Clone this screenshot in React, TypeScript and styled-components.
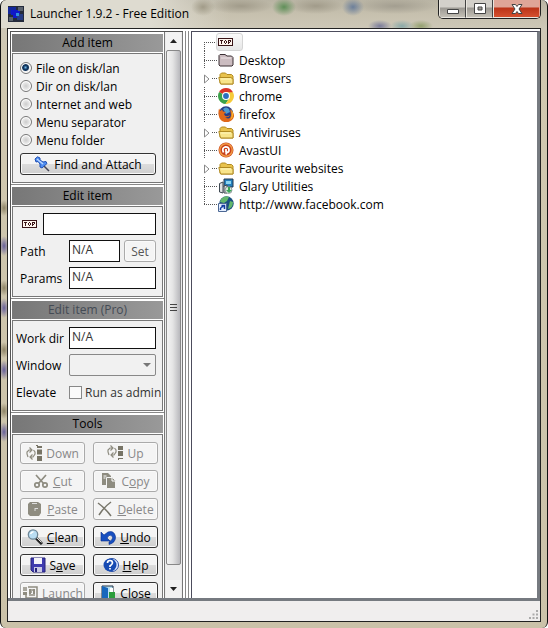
import React from "react";
import styled, { createGlobalStyle, css } from "styled-components";

const GlobalStyle = createGlobalStyle`
  * { box-sizing: border-box; }
  html, body { margin: 0; height: 100%; }
  body, button, input, select {
    font-family: "Open Sans", "Noto Sans", sans-serif;
    font-size: 12px;
    color: #000;
  }
`;

const Window = styled.div`
  display: flex;
  flex-direction: column;
  height: 100vh;
  overflow: hidden;
  padding: 0 6px 6px;
  border-left: 1px solid #111;
  border-right: 1px solid #111;
  border-radius: 6px;
  background:
    radial-gradient(ellipse 5px 8px at 3px 208px, #8d8366, transparent),
    radial-gradient(ellipse 5px 10px at 3px 246px, #67609a, transparent),
    radial-gradient(ellipse 5px 8px at 3px 288px, #8d8366, transparent),
    radial-gradient(ellipse 5px 10px at 3px 308px, #67609a, transparent),
    radial-gradient(ellipse 5px 8px at 3px 350px, #8d8366, transparent),
    radial-gradient(ellipse 5px 10px at 3px 370px, #67609a, transparent),
    radial-gradient(ellipse 5px 8px at 3px 411px, #8d8366, transparent),
    radial-gradient(ellipse 5px 10px at 3px 432px, #67609a, transparent),
    radial-gradient(ellipse 12px 9px at 202px 7px, #a19b88, transparent),
    radial-gradient(ellipse 32px 8px at 240px 6px, #a19b8a, transparent),
    radial-gradient(ellipse 12px 9px at 283px 7px, #5f8f58, transparent),
    radial-gradient(ellipse 28px 8px at 315px 6px, #a19b8a, transparent),
    radial-gradient(ellipse 11px 9px at 352px 7px, #6c7f9a, transparent),
    radial-gradient(ellipse 42px 8px at 394px 6px, #a39e90, transparent),
    radial-gradient(ellipse 12px 6px at 379px 26px, #7b7c9a, transparent),
    radial-gradient(ellipse 12px 6px at 401px 26px, #8aa9a8, transparent),
    radial-gradient(ellipse 12px 6px at 420px 26px, #93a06f, transparent),
    linear-gradient(90deg, #dedbd0 0, #dedbd0 150px, transparent 230px) 0 0 / 100% 28px no-repeat,
    linear-gradient(#b9b4a4 0, #c6c0ae 14px, #cdc7b7 28px, #d0c8b0 60px, #cbc2a9 100%);
`;

const TitleBar = styled.header`
  display: flex;
  flex: none;
  height: 28px;
  align-items: flex-start;
`;

const Title = styled.h1`
  flex: 1;
  margin: 0;
  padding: 4px 0 0 6px;
  font-size: 12px;
  font-weight: 400;
  line-height: 20px;
`;

const AppMark = styled.svg`
  margin: 6px 0 0 1px;
  width: 16px;
  height: 16px;
`;

const Captions = styled.div`
  display: flex;
  height: 19px;
  border: 1px solid #222;
  border-top: 0;
  border-radius: 0 0 5px 5px;
  overflow: hidden;
`;

const Caption = styled.button<{ $close?: boolean }>`
  width: ${(p) => (p.$close ? 47 : 27)}px;
  padding: 0;
  border: 1px solid #e9e6df;
  border-top: 0;
  border-right-color: ${(p) => (p.$close ? "#e9a090" : "#444")};
  background: ${(p) =>
    p.$close
      ? "linear-gradient(#dfa597 0 40%, #bb3419 48%, #d5502f)"
      : "linear-gradient(#d3d0ca 0 40%, #9c9993 48%, #c3bfb5)"};
  svg { display: block; margin: 0 auto; }
`;

const Client = styled.main`
  display: flex;
  flex: 1;
  flex-direction: column;
  min-height: 0;
  border: 1px solid #222;
  background: #fff;
`;

const Body = styled.div`
  display: flex;
  flex: 1;
  min-height: 0;
  padding: 2px 0 0 2px;
  border-bottom: 3px solid #767a80;
`;

const Sidebar = styled.aside`
  display: flex;
  flex: none;
  width: 173px;
  border-left: 1px solid #555;
  border-top: 1px solid #555;
`;

const Groups = styled.div`
  flex: 1;
  min-width: 0;
  overflow: hidden;
  border-right: 1px solid #777;
`;

const Group = styled.section`
  padding: 2px 1px 1px;
  border-bottom: 1px solid #888;
`;

const GroupTitle = styled.h2<{ $muted?: boolean }>`
  height: 18px;
  margin: 0 0 1px;
  background: linear-gradient(90deg, #777, #999);
  color: ${(p) => (p.$muted ? "#444b55" : "#000")};
  font-size: 12px;
  font-weight: 400;
  line-height: 18px;
  text-align: center;
`;

const GroupBody = styled.div<{ $gap: number; $top: number }>`
  display: flex;
  flex-direction: column;
  gap: ${(p) => p.$gap}px;
  padding: ${(p) => p.$top}px 6px 7px 7px;
  border: 1px solid #777;
  background: #f0f0f0;
`;

const Radio = styled.label`
  display: flex;
  height: 18px;
  align-items: center;
  gap: 4px;
  white-space: nowrap;
  input {
    appearance: none;
    width: 12px;
    height: 12px;
    margin: 0;
    border: 1px solid #777;
    border-radius: 50%;
    background: radial-gradient(circle, #ccc, #eee 60%);
    box-shadow: inset 0 0 0 1px #fff;
  }
  input:checked {
    background: radial-gradient(circle at 45% 45%, #6fb8ea 0, #12365e 2px, #12365e 3px, #eee 4px);
  }
`;

const buttonFace = css`
  display: flex;
  align-items: center;
  justify-content: center;
  height: 22px;
  padding: 0;
  border: 1px solid #333;
  border-radius: 3px;
  background: linear-gradient(#f4f4f4 0 48%, #dcdcdc 52%, #cfcfcf);
  box-shadow: inset 0 0 0 1px #fafafa;
  white-space: nowrap;
  &:disabled {
    border-color: #aaa;
    background: #f4f4f4;
    color: #888;
  }
`;

const Button = styled.button`
  ${buttonFace}
  gap: 4px;
  svg { flex: none; }
`;

const FindButton = styled(Button)`
  margin-top: 4px;
`;

const SetButton = styled(Button)`
  flex: none;
  width: 32px;
  &:disabled { color: #555; }
`;

const Field = styled.div`
  display: flex;
  height: 22px;
  align-items: center;
  gap: 4px;
`;

const FieldLabel = styled.label`
  flex: none;
  width: 45px;
  white-space: nowrap;
`;

const ProLabel = styled(FieldLabel)`
  width: 49px;
  margin-left: -4px;
`;

const TopLabel = styled.label`
  display: flex;
  flex: none;
  width: 19px;
  padding-left: 2px;
`;

const TextBox = styled.input`
  flex: 1;
  min-width: 0;
  height: 22px;
  padding: 0 2px 4px;
  border: 1px solid #111;
  border-radius: 0;
  background: #fff;
  color: #333;
`;

const SelectWrap = styled.div`
  display: flex;
  flex: 1;
  align-items: center;
`;

const Select = styled.select`
  appearance: none;
  width: 100%;
  height: 22px;
  border: 1px solid #888;
  border-radius: 2px;
  background: #f1f1f1;
  opacity: 1;
`;

const SelectArrow = styled.svg`
  flex: none;
  margin-left: -13px;
  width: 8px;
  height: 4px;
  pointer-events: none;
`;

const Check = styled.label`
  display: flex;
  align-items: center;
  gap: 3px;
  color: #333;
  white-space: nowrap;
  input {
    appearance: none;
    width: 13px;
    height: 13px;
    margin: 0;
    border: 1px solid #888;
    background: #fafafa;
  }
`;

const Tools = styled.div`
  display: grid;
  grid-template-columns: 65px 65px;
  gap: 6px 8px;
`;

const ScrollBar = styled.div`
  display: flex;
  flex: none;
  flex-direction: column;
  width: 18px;
  padding: 0 1px;
  border-right: 1px solid #777;
  background: #ececec;
`;

const ScrollArrow = styled.button`
  height: 18px;
  padding: 0;
  border: 0;
  background: #f2f2f2;
  svg { display: block; margin: 0 auto; }
`;

const Track = styled.div`
  display: flex;
  flex: 1;
  flex-direction: column;
  min-height: 0;
  padding-bottom: 15px;
`;

const Thumb = styled.div`
  display: flex;
  flex: 1;
  align-items: center;
  justify-content: center;
  border: 1px solid #888;
  border-radius: 2px;
  background: linear-gradient(90deg, #f4f4f4, #e4e4e4 45%, #b8b8bc);
`;

const Splitter = styled.div`
  flex: none;
  width: 4px;
  margin: 0 2px;
  border: 1px solid #888;
  border-width: 0 1px;
`;

const TreePane = styled.div`
  flex: 1;
  min-width: 0;
  padding: 1px 0 0 12px;
  border: 1px solid #4c4c5c;
  border-right: 3px solid #767a80;
  border-bottom: 0;
  background: #fff;
`;

const Tree = styled.ul`
  margin: 0;
  padding: 0;
  list-style: none;
`;

const Node = styled.li`
  display: flex;
  height: 18px;
  align-items: center;
  line-height: 18px;
  white-space: nowrap;
  > svg { flex: none; }
`;

const NodeButton = styled.button<{ $selected?: boolean }>`
  display: flex;
  align-items: center;
  height: 18px;
  gap: 5px;
  padding: 0 8px 0 1px;
  margin-left: -2px;
  border: 1px solid ${(p) => (p.$selected ? "#d4d4d4" : "transparent")};
  border-radius: 3px;
  background: ${(p) => (p.$selected ? "linear-gradient(#fafafa, #e6e6e6)" : "none")};
`;

const StatusBar = styled.footer`
  display: flex;
  flex: none;
  height: 20px;
  align-items: flex-end;
  justify-content: flex-end;
  padding: 2px;
  background: #f0eeee;
`;

type IconName =
  | "top" | "desktop" | "folder" | "chrome" | "firefox" | "avast" | "glary" | "web"
  | "pin" | "down" | "up" | "cut" | "copy" | "paste" | "delete" | "clean" | "undo"
  | "save" | "help" | "launch" | "close";

const gray = "#8e8c80";

const art: Record<IconName, React.ReactNode> = {
  top: (
    <g fill="none" stroke="#3a1518" shapeRendering="crispEdges">
      <path d="M.5 4.5h14v7H.5z" fill="#fff5ee" />
      <path d="M2 6.5h3M3.5 6v4M6.5 7v2M8.500 7v2M7 6.500h1M7 9.500h1M10.500 6v4M11 6.500h2M12.500 6v2M11 8.500h1" />
    </g>
  ),
  desktop: (
    <g stroke="#3c3035" fill="#cbbcc0">
      <path d="M1 13V3.500L2 2.500h5L9 4h4.500L15 5.500V13l-1 1H2z" />
      <path d="M3 6h10" stroke="#efe5e8" />
    </g>
  ),
  folder: (
    <g stroke="#b18a22">
      <path d="M2 13V4.500L3.500 3h4L9 4.500h4.500L15 6v8H3z" fill="#e8c24c" />
      <path d="M.8 7.500h12L15 9v5H2.500z" fill="#f8e48a" />
      <path d="M3 9h10" stroke="#fff6bd" />
    </g>
  ),
  chrome: (
    <g>
      <path d="M8 8 1.100 4A8 8 0 0 1 15 4.300z" fill="#da3528" />
      <path d="M8 8 1.100 4A8 8 0 0 0 7.500 16L11.500 10z" fill="#3ca14a" />
      <path d="M8 4.300h7A8 8 0 0 1 7.500 16L11.500 10z" fill="#f6cb3a" />
      <circle cx="8" cy="8" r="4" fill="#fff" />
      <circle cx="8" cy="8" r="2.900" fill="#2b6fc0" />
    </g>
  ),
  firefox: (
    <g>
      <circle cx="8" cy="7.500" r="7.200" fill="#263e87" />
      <path d="M5 3q3-3 6 0l1 3-4 2z" fill="#4d9bd1" />
      <path d="M1 2.500 2.500 5 4 3.500l1 2L8 6 6 8q1 3 4 2l2-1q-1 3-5 2 5 4 6-2l-1-6q7 6 2 11-5 4-10 1Q-1 11 1 2.500z" fill="#e0681a" />
      <path d="M13 3q5 7-1 11 3-4 1-11z" fill="#f7b72f" />
    </g>
  ),
  avast: (
    <g fill="none">
      <circle cx="8" cy="8" r="7.500" fill="#c8401c" />
      <circle cx="8" cy="8" r="6.200" stroke="#f09a45" strokeWidth="1.500" />
      <path d="M5.500 10.500Q3.500 6 7 5q4-.5 4 3 0 2.500-2.500 2.500L8 12.500M8 7v3.500" stroke="#fff" strokeWidth="1.800" />
    </g>
  ),
  glary: (
    <g>
      <path d="M6 1h9v8H6z" fill="#247fbc" stroke="#26384e" />
      <path d="M8 3h5v3H8z" fill="#8cd5f0" />
      <path d="M1.500 5.500 5 4v11l-3.500-1zM6 8l3-1v8H6z" fill="#dfe2e3" stroke="#3e4851" />
      <circle cx="10.500" cy="12" r="3.500" fill="#d5ead8" stroke="#667" strokeWidth=".6" />
      <path d="M10 9v3H8l3 3 3-3h-2V9z" fill="#36a455" />
    </g>
  ),
  web: (
    <g>
      <circle cx="8.500" cy="7.500" r="7.200" fill="#194f80" />
      <path d="M3 3q4-4 8-2L9 5 6 7 2 6zM12 5l3 1q0 6-5 7z" fill="#62b76b" />
      <path d="M.5 7.500h8v8h-8z" fill="#e5efff" stroke="#4c6894" />
      <path d="M2.500 14Q2 11 5.500 10.500M3.500 9.500h3V13" fill="none" stroke="#123ca0" strokeWidth="1.500" />
    </g>
  ),
  pin: (
    <g stroke="#1f4fb4">
      <path d="M9 9l6 6" stroke="#445" strokeWidth="1.500" />
      <path d="M1 3 3.500.8 6 2v2l3 2 3-.5 1 2L8 12l-2-1V8L4 5.500 2 6z" fill="#4f8df0" />
      <path d="M3 3l6 5" stroke="#bad6ff" strokeWidth="1.500" />
    </g>
  ),
  down: (
    <g fill="none" stroke={gray} strokeWidth="1.200">
      <path d="M2 12 1 9V7l2-2h3M3.500 2.500 6 5 3.500 7.500M7.500 5 9 7v2l-2 3H4M6.500 9.500 4 12l2.500 2.500" />
      <path d="M10 0h2v1h4v2h-5V1h-1zM11 4.500h5v5h-5zM11 11h5v5h-5z" fill="#777466" stroke="none" />
    </g>
  ),
  up: (
    <g fill="none" stroke={gray} strokeWidth="1.200">
      <path d="M2 10 1 7V5l2-2h3M3.500.5 6 3 3.500 5.500M7.500 3 9 5v2l-2 3H4M6.500 7.500 4 10l2.500 2.500" />
      <path d="M11 1h5v4h-5zM11 6h5v5h-5zM11 13h5v1h-4v1h-1z" fill="#777466" stroke="none" />
    </g>
  ),
  cut: (
    <g fill="none" stroke={gray} strokeWidth="1.700">
      <path d="M3 2l8 9M13 2l-8 9" />
      <circle cx="4" cy="12" r="2.200" />
      <circle cx="12" cy="12" r="2.200" />
    </g>
  ),
  copy: (
    <g fill={gray} stroke="none">
      <path d="M1 0h6l3 3v9H1z" />
      <path d="M2.500 3h3M2.500 5h2" stroke="#fff" />
      <path d="M5.500 4.500h6l3 3v8h-9z" stroke="#f4f4f4" />
      <path d="M11 5v3h3" fill="none" stroke="#fff" />
    </g>
  ),
  paste: (
    <g fill={gray}>
      <path d="M1 3l2-2h8l3 2v9l-2 3H3l-2-2z" />
      <path d="M5 2.500h5M8 7.500h3M8 7v3" stroke="#ddd" fill="none" />
    </g>
  ),
  delete: <path d="M1 2q7 5 13 13M14 1Q7 6 2 14" fill="none" stroke="#77756a" strokeWidth="1.500" />,
  clean: (
    <g>
      <path d="M9 9l6 6" stroke="#222" strokeWidth="3" />
      <path d="M9.500 8.500l5 5" stroke="#ddd" />
      <circle cx="6" cy="5.500" r="4.700" fill="#b9ddf3" stroke="#6f8797" strokeWidth="1.300" />
      <path d="M3.500 5q1-2.500 3-2" stroke="#fff" fill="none" strokeWidth="1.500" />
    </g>
  ),
  undo: (
    <path d="M1 3v9h9L7 9q2-4 5-2 2 3-3 6v2.500q7-2 6.500-8Q14 1 8 3L4 6z" fill="#174fc0" stroke="#092e8c" strokeWidth=".6" />
  ),
  save: (
    <g>
      <path d="M1 1h14v14H3l-2-2z" fill="#3f3caf" stroke="#26237a" />
      <path d="M4 1h8v6H4z" fill="#f3f3fa" />
      <path d="M4 10h8v5H4z" fill="#c9c9e4" />
      <path d="M5 11h2v4H5z" fill="#26237a" />
    </g>
  ),
  help: (
    <g>
      <circle cx="9" cy="8" r="6.500" fill="#e2eaff" stroke="#294fa4" />
      <circle cx="7" cy="8" r="6.500" fill="#174bb3" />
      <path d="M4.500 6q0-2.500 2.500-2.500T9.500 6Q9.500 7 7 9v1M7 11v1.500" fill="none" stroke="#fff" strokeWidth="1.700" />
    </g>
  ),
  launch: (
    <g fill="none" stroke={gray} strokeWidth="1.500">
      <path d="M6 2h9v11H4V9M1 3h4M1 5h4M8 5h5M8 7h2M12 7h1M7 10h6" />
      <path d="M1 7h4v3H1zM7 4h2v5H7zM11 4h2v5h-2z" fill={gray} stroke="none" />
    </g>
  ),
  close: (
    <g>
      <path d="M2 1h11v14H2z" fill="#b9e1f2" stroke="#234" />
      <path d="M2 1l6 2v13l-6-2z" fill="#1767bd" />
      <path d="M9 7h6v7H9z" fill="#2b9d3c" />
      <path d="M10 3h3v4h-3z" fill="#fff" />
    </g>
  ),
};

const Icon = ({ name }: { name: IconName }) => (
  <svg width="16" height="16" viewBox="0 0 16 16" aria-hidden="true">{art[name]}</svg>
);

const Branch = ({ expandable, place }: { expandable?: boolean; place: "first" | "middle" | "last" }) => (
  <svg width="14" height="18" viewBox="0 0 14 18" aria-hidden="true">
    <g stroke="#555" strokeDasharray="1 1" shapeRendering="crispEdges">
      {!expandable && <path d={`M.5 ${place === "first" ? 9 : 0}V${place === "last" ? 10 : 18}`} />}
      <path d={`M${expandable ? 8 : 0} 9.500H14`} />
    </g>
    {expandable && <path d="M.5 6v8L5 10z" fill="#fff" stroke="#888" />}
  </svg>
);

const nodes: { icon: IconName; text: string; expandable?: boolean }[] = [
  { icon: "top", text: "" },
  { icon: "desktop", text: "Desktop" },
  { icon: "folder", text: "Browsers", expandable: true },
  { icon: "chrome", text: "chrome" },
  { icon: "firefox", text: "firefox" },
  { icon: "folder", text: "Antiviruses", expandable: true },
  { icon: "avast", text: "AvastUI" },
  { icon: "folder", text: "Favourite websites", expandable: true },
  { icon: "glary", text: "Glary Utilities" },
  { icon: "web", text: "http://www.facebook.com" },
];

const tools: { icon: IconName; pre?: string; key: string; post: string; disabled?: boolean }[] = [
  { icon: "down", key: "", post: "Down", disabled: true },
  { icon: "up", key: "", post: "Up", disabled: true },
  { icon: "cut", key: "C", post: "ut", disabled: true },
  { icon: "copy", pre: "C", key: "o", post: "py", disabled: true },
  { icon: "paste", key: "P", post: "aste", disabled: true },
  { icon: "delete", key: "D", post: "elete", disabled: true },
  { icon: "clean", key: "C", post: "lean" },
  { icon: "undo", key: "U", post: "ndo" },
  { icon: "save", pre: "S", key: "a", post: "ve" },
  { icon: "help", key: "H", post: "elp" },
  { icon: "launch", key: "", post: "Launch", disabled: true },
  { icon: "close", key: "", post: "Close" },
];

const sources = ["File on disk/lan", "Dir on disk/lan", "Internet and web", "Menu separator", "Menu folder"];

export default function App() {
  return (
    <Window>
      <GlobalStyle />
      <TitleBar>
        <AppMark viewBox="0 0 16 16" aria-hidden="true">
          <path d="M0 0h16v16H0z" fill="#252b3c" />
          <path d="M0 1h8v7H0z" fill="#14289b" />
          <path d="M3 4h9v8H5V9H3z" fill="#1018c8" />
          <path d="M9 8h6v6H9z" fill="#263c85" />
          <path d="M8 7h3v3H8z" fill="#2e8fe0" />
          <path d="M10 1h5v4h-5zM1 11h4v4H1z" fill="#59616d" />
        </AppMark>
        <Title>Launcher 1.9.2 - Free Edition</Title>
        <Captions>
          <Caption aria-label="Minimize">
            <svg width="14" height="14"><path d="M1.500 7.500h11v4h-11z" fill="#fff" stroke="#444" /></svg>
          </Caption>
          <Caption aria-label="Maximize">
            <svg width="14" height="14"><path d="M1.500 1.500h11v10h-11zM5 5v3h4V5z" fill="#fff" fillRule="evenodd" stroke="#444" /></svg>
          </Caption>
          <Caption $close aria-label="Close window">
            <svg width="14" height="14"><path d="M2 2.500h3.500L7 4.500l1.500-2H12L9 7l3 4.500H8.500L7 9.500l-1.500 2H2L5 7z" fill="#fff" stroke="#444" /></svg>
          </Caption>
        </Captions>
      </TitleBar>
      <Client>
        <Body>
          <Sidebar>
            <Groups>
              <Group>
                <GroupTitle>Add item</GroupTitle>
                <GroupBody $gap={0} $top={5}>
                  {sources.map((s, i) => (
                    <Radio key={s}><input type="radio" name="source" defaultChecked={i === 0} />{s}</Radio>
                  ))}
                  <FindButton><Icon name="pin" />Find and Attach</FindButton>
                </GroupBody>
              </Group>
              <Group>
                <GroupTitle>Edit item</GroupTitle>
                <GroupBody $gap={5} $top={6}>
                  <Field>
                    <TopLabel htmlFor="name"><Icon name="top" /></TopLabel>
                    <TextBox id="name" aria-label="Item name" />
                  </Field>
                  <Field>
                    <FieldLabel htmlFor="path">Path</FieldLabel>
                    <TextBox id="path" defaultValue="N/A" />
                    <SetButton disabled>Set</SetButton>
                  </Field>
                  <Field>
                    <FieldLabel htmlFor="params">Params</FieldLabel>
                    <TextBox id="params" defaultValue="N/A" />
                  </Field>
                </GroupBody>
              </Group>
              <Group>
                <GroupTitle $muted>Edit item (Pro)</GroupTitle>
                <GroupBody $gap={5} $top={6}>
                  <Field>
                    <ProLabel htmlFor="workdir">Work dir</ProLabel>
                    <TextBox id="workdir" defaultValue="N/A" />
                  </Field>
                  <Field>
                    <ProLabel htmlFor="window">Window</ProLabel>
                    <SelectWrap>
                      <Select id="window" disabled />
                      <SelectArrow viewBox="0 0 8 4" aria-hidden="true"><path d="M0 0h8L4 4z" fill="#777" /></SelectArrow>
                    </SelectWrap>
                  </Field>
                  <Field>
                    <ProLabel htmlFor="elevate">Elevate</ProLabel>
                    <Check><input id="elevate" type="checkbox" disabled />Run as admin</Check>
                  </Field>
                </GroupBody>
              </Group>
              <Group>
                <GroupTitle>Tools</GroupTitle>
                <GroupBody $gap={0} $top={7}>
                  <Tools>
                    {tools.map((t) => (
                      <Button key={t.icon} disabled={t.disabled}>
                        <Icon name={t.icon} />
                        <span>{t.pre}<u>{t.key}</u>{t.post}</span>
                      </Button>
                    ))}
                  </Tools>
                </GroupBody>
              </Group>
            </Groups>
            <ScrollBar>
              <ScrollArrow aria-label="Scroll up"><svg width="7" height="4"><path d="M0 4h7L3.500 0z" fill="#222" /></svg></ScrollArrow>
              <Track>
                <Thumb><svg width="7" height="8"><path d="M0 .5h7M0 3.500h7M0 6.500h7" stroke="#444" /></svg></Thumb>
              </Track>
              <ScrollArrow aria-label="Scroll down"><svg width="7" height="4"><path d="M0 0h7L3.500 4z" fill="#222" /></svg></ScrollArrow>
            </ScrollBar>
          </Sidebar>
          <Splitter />
          <TreePane>
            <Tree>
              {nodes.map((n, i) => (
                <Node key={i}>
                  <Branch expandable={n.expandable} place={i === 0 ? "first" : i === nodes.length - 1 ? "last" : "middle"} />
                  <NodeButton $selected={i === 0} aria-label={n.text || "Top"}>
                    <Icon name={n.icon} />{n.text}
                  </NodeButton>
                </Node>
              ))}
            </Tree>
          </TreePane>
        </Body>
        <StatusBar>
          <svg width="9" height="9" aria-hidden="true">
            <path d="M7 0h2v2H7zM7 3.500h2v2H7zM7 7h2v2H7zM3.500 3.500h2v2h-2zM3.500 7h2v2h-2zM0 7h2v2H0z" fill="#aaa" />
          </svg>
        </StatusBar>
      </Client>
    </Window>
  );
}
